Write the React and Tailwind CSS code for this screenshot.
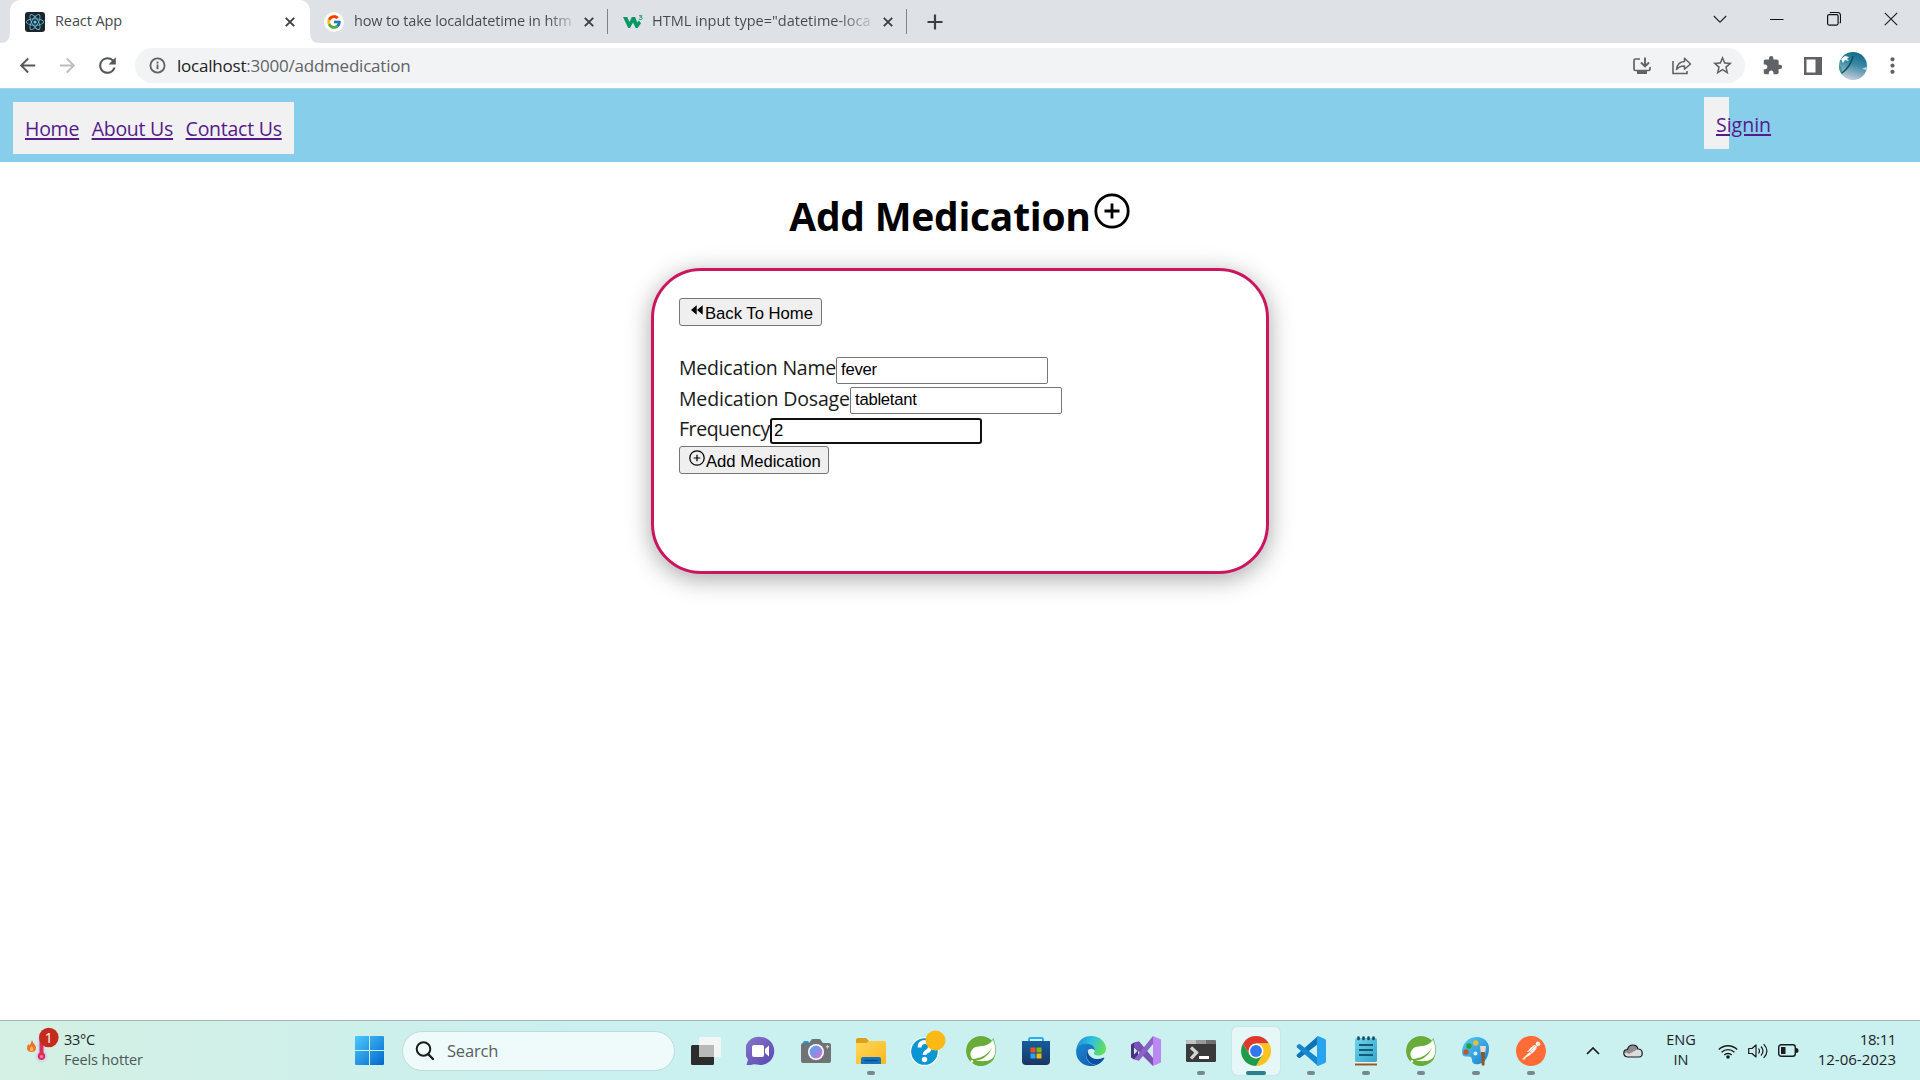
import { FcGoogle } from "react-icons/fc";
import { FaReact } from "react-icons/fa";
import { SiSpring, SiPostman } from "react-icons/si";
import {
  MdArrowBack,
  MdArrowForward,
  MdRefresh,
  MdStarBorder,
  MdExtension,
  MdMoreVert,
} from "react-icons/md";

function CloseX({ className = "" }) {
  return (
    <svg viewBox="0 0 10 10" className={"h-[10px] w-[10px] shrink-0 " + className}>
      <path d="M.8.8l8.4 8.4M9.2.8L.8 9.2" stroke="#3c4043" strokeWidth="1.9" fill="none" />
    </svg>
  );
}

function TabStrip() {
  return (
    <div className="flex h-[43px] items-end bg-[#dee1e6]">
      <svg viewBox="0 0 10 10" className="h-[10px] w-[10px]">
        <path d="M10 0v10H0Q10 10 10 0z" fill="#fff" />
      </svg>
      <div className="flex h-[43px] w-[300px] items-center rounded-t-[10px] bg-white pr-[15px] pl-[15px]">
        <div className="flex h-5 w-5 items-center justify-center rounded-[3px] bg-[#20232a]">
          <FaReact className="h-[18px] w-[18px] text-[#61c9e6]" />
        </div>
        <span className="ml-[10px] flex-1 pb-[2px] text-[14.5px] tracking-[-0.1px] text-[#45484c]">React App</span>
        <CloseX />
      </div>
      <svg viewBox="0 0 10 10" className="h-[10px] w-[10px]">
        <path d="M0 0v10H10Q0 10 0 0z" fill="#fff" />
      </svg>
      <div className="flex h-[43px] w-[290px] items-center border-[#808488] pl-[4px]">
        <div className="flex h-5 w-5 shrink-0 items-center justify-center rounded-full bg-white">
          <FcGoogle className="h-4 w-4" />
        </div>
        <span className="ml-[10px] w-[219px] overflow-hidden bg-linear-to-r from-[#45484c] from-88% to-[#45484c]/20 bg-clip-text pb-[2px] text-[14.5px] tracking-[-0.15px] whitespace-nowrap text-transparent">
          how to take localdatetime in htm
        </span>
        <CloseX className="ml-[11px]" />
        <div className="ml-[13px] h-[25px] w-px shrink-0 bg-[#808488]" />
      </div>
      <div className="flex h-[43px] w-[297px] items-center pl-[13px]">
        <svg viewBox="0 0 20 14" className="h-[14px] w-5 shrink-0">
          <path d="M0 2h4.200l2.300 5L8.800 2h3.400l2 5.200L16 5.600l2 2.600L14.600 13h-1.900L10 7.600 7 13H5.200z" fill="#059862" />
          <path d="M16 .8h3l-1.500 1.500c2.500 0 2 2.700-.2 2.200L16 4" fill="none" stroke="#059862" strokeWidth="1" />
        </svg>
        <span className="ml-[9px] w-[219px] overflow-hidden bg-linear-to-r from-[#45484c] from-85% to-[#45484c]/20 bg-clip-text pb-[2px] text-[14.5px] whitespace-nowrap text-transparent">
          HTML input type="datetime-loca
        </span>
        <CloseX className="ml-[12px]" />
        <div className="ml-[13px] h-[25px] w-px shrink-0 bg-[#808488]" />
      </div>
      <div className="flex h-[43px] flex-1 items-center pl-5">
        <svg viewBox="0 0 16 16" className="h-4 w-4">
          <path d="M8 .5v15M.5 8h15" stroke="#3c4043" strokeWidth="2.2" />
        </svg>
      </div>
      <div className="flex h-[43px] items-center gap-[43px] pr-[22px] pb-[6px]">
        <svg viewBox="0 0 14 14" className="h-[14px] w-[14px]">
          <path d="M.8 4L7 10.200 13.200 4" fill="none" stroke="#222" strokeWidth="1.100" />
        </svg>
        <svg viewBox="0 0 14 14" className="h-[14px] w-[14px]">
          <path d="M0 7.500h13.500" stroke="#111" />
        </svg>
        <svg viewBox="0 0 14 14" className="h-[14px] w-[14px]">
          <rect x=".6" y="2.600" width="10.500" height="10.500" rx="1.500" fill="none" stroke="#111" strokeWidth="1.200" />
          <path d="M3 1q.3-.5 1-.5h6.500q3 0 3 3V10q0 .8-.8 1" fill="none" stroke="#111" strokeWidth="1.100" />
        </svg>
        <svg viewBox="0 0 14 14" className="h-[14px] w-[14px]">
          <path d="M.8.8l12.400 12.400M13.200.8L.8 13.200" stroke="#222" strokeWidth="1.200" />
        </svg>
      </div>
    </div>
  );
}

function Toolbar() {
  return (
    <div className="flex h-[45px] items-center bg-white">
      <div className="flex w-[135px] items-center pl-[16px] text-[#54575b]">
        <MdArrowBack className="h-[23px] w-[23px]" />
        <MdArrowForward className="ml-[17px] h-[23px] w-[23px] text-[#bcbec1]" />
        <MdRefresh className="ml-[16px] h-[25px] w-[25px]" />
      </div>
      <div className="flex h-[35px] w-[1610px] items-center rounded-full bg-[#f1f3f4] pr-[11px] pl-[14px] text-[#5f6368]">
        <svg viewBox="0 0 18 18" className="h-[17px] w-[17px]">
          <circle cx="9" cy="9" r="7.500" fill="none" stroke="#5f6368" strokeWidth="1.900" />
          <path d="M9 8v5M9 4.800v2" stroke="#5f6368" strokeWidth="2" />
        </svg>
        <span className="ml-[11px] flex-1 text-[17px] tracking-[-0.22px]">
          <span className="text-[#202124]">localhost</span>:3000/addmedication
        </span>
        <svg viewBox="0 0 18 18" className="h-[18px] w-[18px]">
          <path d="M7 2H2.500Q1 2 1 3.500V12q0 1.500 1.500 1.500h13q1.500 0 1.500-1.500v-2" fill="none" stroke="#5f6368" strokeWidth="1.700" />
          <path d="M4 13h10v4H4z" fill="#5f6368" />
          <path d="M12 .5V9M8 5.500l4 4 4-4" fill="none" stroke="#5f6368" strokeWidth="1.900" />
        </svg>
        <svg viewBox="0 0 20 18" className="ml-[21px] h-[18px] w-5">
          <path d="M1 4v12.500h14V14" fill="none" stroke="#5f6368" strokeWidth="1.600" />
          <path d="M4.500 12.500Q5.500 5 12.500 4.600V1.300l6 5.700-6 5.300V9Q7.500 8.800 4.500 12.500z" fill="none" stroke="#5f6368" strokeWidth="1.500" strokeLinejoin="round" />
        </svg>
        <MdStarBorder className="ml-[19px] h-[23px] w-[23px]" />
      </div>
      <div className="flex flex-1 items-center pl-[17px] text-[#5f6368]">
        <MdExtension className="h-[21px] w-[21px]" />
        <svg viewBox="0 0 18 18" className="ml-[21px] h-[18px] w-[18px]">
          <path fillRule="evenodd" d="M0 0h18v18H0zM2.500 2.500v13h9v-13z" fill="#5f6368" />
        </svg>
        <svg viewBox="0 0 28 28" className="ml-[17px] h-7 w-7">
          <defs>
            <linearGradient id="sky" x1=".7" y1="0" x2=".4" y2="1">
              <stop offset="0" stopColor="#0c6a87" />
              <stop offset=".45" stopColor="#3c8aa6" />
              <stop offset="1" stopColor="#c9cfdc" />
            </linearGradient>
            <clipPath id="avatarClip"><circle cx="14" cy="14" r="14" /></clipPath>
          </defs>
          <g clipPath="url(#avatarClip)">
            <path d="M0 0h28v28H0z" fill="url(#sky)" />
            <path d="M0 13Q4 15 3 26L0 28z" fill="#2f9c95" />
            <path d="M14 4Q12 14 3 21" fill="none" stroke="#0a5560" strokeWidth="1.500" />
            <path d="M2 7l4-3 4 1-2 2 2 2-4-1-2 3z" fill="#fff" />
            <path d="M23 17l4-2 1 3z" fill="#bfe3ee" />
          </g>
        </svg>
        <MdMoreVert className="ml-[13px] h-[25px] w-[25px]" />
      </div>
    </div>
  );
}

function PlusCircle({ className, stroke }) {
  return (
    <svg viewBox="0 0 36 36" className={className}>
      <circle cx="18" cy="18" r="16.200" fill="none" stroke="#000" strokeWidth={stroke} />
      <path d="M18 10.500v15M10.500 18h15" stroke="#000" strokeWidth={stroke} />
    </svg>
  );
}

const inputBase =
  "h-[27px] w-[212px] rounded-[2px] border border-[#767676] bg-white px-[4px] pb-px font-['Liberation_Sans',sans-serif] text-[16.67px] text-black outline-none";

function NavBar() {
  return (
    <nav className="flex h-[74px] items-start border-t border-[#a9d5e6] bg-[#87ceeb] text-[19.5px] tracking-[-0.25px] text-[#551a8b]">
      <div className="mt-[13px] ml-[13px] flex h-[52px] w-[281px] items-center gap-[12.5px] bg-[#f1f1f1] pt-[2px] pl-[12px] whitespace-nowrap">
        <a className="underline decoration-[1.5px] underline-offset-2">Home</a>
        <a className="underline decoration-[1.5px] underline-offset-2">About Us</a>
        <a className="underline decoration-[1.5px] underline-offset-2">Contact Us</a>
      </div>
      <div className="mt-[8px] mr-[191px] ml-auto flex h-[52px] w-[25px] items-center bg-[#f1f1f1] pt-[3px] pl-[12px]">
        <a className="tracking-[0px] underline decoration-[1.5px] underline-offset-2">Signin</a>
      </div>
    </nav>
  );
}

function MedicationForm() {
  const button =
    "flex h-7 items-center rounded-[3px] border border-[#767676] bg-[#efefef] pt-[2px] font-['Liberation_Sans',sans-serif] text-[16.67px] text-black whitespace-nowrap";
  return (
    <main className="flex flex-1 flex-col items-center bg-white">
      <div className="flex h-[106px] items-start pr-[1px]">
        <h1 className="mt-[34px] text-[39px] leading-[40px] font-bold tracking-[-0.25px] text-black">Add Medication</h1>
        <PlusCircle className="mt-[31px] ml-[3px] h-9 w-9" stroke={2.800} />
      </div>
      <form className="flex h-[306px] w-[618px] flex-col items-start rounded-[50px] border-[3px] border-[#cb1560] bg-white pt-[27px] pl-[25px] text-[19.5px] tracking-[-0.25px] whitespace-nowrap text-[#1a1a1a] shadow-[0_5px_25px_rgba(0,0,0,0.35)]">
        <button type="button" className={button + " mb-[29px] w-[143px] pl-[11px] tracking-normal"}>
          <svg viewBox="0 0 12 10" className="mr-[2px] mb-[6px] h-[10px] w-[12px]">
            <path d="M0 5l5.700-4.700v9.400zM6 5L11.700.3v9.400z" fill="#000" />
          </svg>
          Back To Home
        </button>
        <label className="flex h-[31px] items-start leading-[25px]">
          <span className="w-[157px]">Medication Name</span>
          <input className={inputBase + " mt-[2px]"} defaultValue="fever" />
        </label>
        <label className="flex h-[30px] items-start leading-[25px]">
          <span className="w-[171px] tracking-[-0.17px]">Medication Dosage</span>
          <input className={inputBase + " mt-[1px]"} defaultValue="tabletant" />
        </label>
        <label className="flex h-[30px] items-start leading-[25px]">
          <span className="w-[91px] tracking-[-0.45px]">Frequency</span>
          <input className="mt-[2px] h-[26px] w-[212px] rounded-[3px] border-2 border-[#101010] bg-white px-[2px] pb-[1px] font-['Liberation_Sans',sans-serif] text-[16.67px] text-black outline-none" defaultValue="2" />
        </label>
        <button type="button" className={button + " w-[150px] pl-[9px] tracking-normal"}>
          <PlusCircle className="mr-px mb-[6px] h-[16px] w-[16px]" stroke={2.800} />
          Add Medication
        </button>
      </form>
    </main>
  );
}

function Icon({ name }) {
  const cls = "h-[30px] w-[30px]";
  switch (name) {
    case "taskview":
      return (
        <svg viewBox="0 0 30 30" className={cls}>
          <rect x="0" y="9" width="23" height="20" rx="1.500" fill="#2c2c2c" />
          <rect x="8" y="1" width="22" height="20" rx="1" fill="#f4f4f4" opacity=".95" />
          <path d="M8 9h15v12H8z" fill="#b9b9b9" />
        </svg>
      );
    case "chat":
      return (
        <svg viewBox="0 0 30 30" className={cls}>
          <defs><linearGradient id="chat" x1="0" y1="0" x2="1" y2="1"><stop offset="0" stopColor="#8c74cc" /><stop offset="1" stopColor="#5548b0" /></linearGradient></defs>
          <path d="M15 1a14 14 0 1 1-4 27.600Q8 27.500 5 29H.5L2 23.500A14 14 0 0 1 15 1z" fill="url(#chat)" />
          <rect x="6" y="9" width="12" height="12" rx="2" fill="#fff" />
          <path d="M19 13l4-3.500v11L19 17z" fill="#fff" />
        </svg>
      );
    case "camera":
      return (
        <svg viewBox="0 0 30 30" className={cls}>
          <defs>
            <linearGradient id="lens" x1="0" y1="0" x2="1" y2="1"><stop offset="0" stopColor="#49b0f0" /><stop offset=".5" stopColor="#8a8de6" /><stop offset="1" stopColor="#e070d0" /></linearGradient>
          </defs>
          <rect x="2" y="5" width="6" height="4" rx="1.500" fill="#1c9be0" />
          <path d="M2 7h6l3-4h8l3 4h6q2 0 2 2v16q0 2-2 2H2q-2 0-2-2V9q0-2 2-2z" fill="#6f7376" />
          <circle cx="15" cy="16" r="8" fill="#fff" />
          <circle cx="15" cy="16" r="6.500" fill="url(#lens)" />
          <path d="M26.500 9v3.500M24.800 10.800h3.500" stroke="#d8d8d8" />
        </svg>
      );
    case "folder":
      return (
        <svg viewBox="0 0 30 30" className={cls}>
          <defs><linearGradient id="folder" x1="0" y1="0" x2="1" y2="1"><stop offset="0" stopColor="#ffd75a" /><stop offset="1" stopColor="#f8b91c" /></linearGradient></defs>
          <path d="M0 4q0-2 2-2h8l3 3v5H0z" fill="#dca01a" />
          <path d="M0 7h10l3-2h15q2 0 2 2v21H0z" fill="url(#folder)" />
          <path d="M5 28v-5q0-2 2-2h16q2 0 2 2v5z" fill="#1673bd" />
          <path d="M9 24.500h12" stroke="#0c4d87" strokeWidth="1.500" strokeLinecap="round" />
        </svg>
      );
    case "help":
      return (
        <svg viewBox="0 0 36 36" className="mb-[6px] ml-[4px] h-9 w-9 shrink-0">
          <circle cx="14.500" cy="21.500" r="14.500" fill="#fff" />
          <circle cx="14.500" cy="21.500" r="13.300" fill="#0a95d3" />
          <path d="M9.500 17.500q0-5.500 5.500-5.500t5 4.700q0 3.300-3 4.700-2.500 1.500-2.300 3.500" fill="none" stroke="#fff" strokeWidth="4" />
          <circle cx="14.500" cy="29.500" r="2.700" fill="#fff" />
          <circle cx="25.500" cy="10.500" r="10" fill="#fdb913" />
        </svg>
      );
    case "spring":
      return (
        <div className="flex h-[30px] w-[30px] items-center justify-center rounded-full bg-white">
          <SiSpring className="h-[30px] w-[30px] text-[#68ad3a]" />
        </div>
      );
    case "store":
      return (
        <svg viewBox="0 0 30 30" className={cls}>
          <defs><linearGradient id="store" x1="0" y1="0" x2="0" y2="1"><stop offset="0" stopColor="#145d9e" /><stop offset="1" stopColor="#1b3562" /></linearGradient></defs>
          <path d="M8 6V3.500Q8 2 9.500 2h11Q22 2 22 3.500V6" fill="none" stroke="#27b0ee" strokeWidth="2" />
          <path d="M1 5h28v20q0 4-4 4H5q-4 0-4-4z" fill="url(#store)" />
          <path d="M9.500 11.500h5v5h-5z" fill="#f25022" />
          <path d="M15.500 11.500h5v5h-5z" fill="#7fba00" />
          <path d="M9.500 17.500h5v5h-5z" fill="#22a7f0" />
          <path d="M15.500 17.500h5v5h-5z" fill="#ffb900" />
        </svg>
      );
    case "edge":
      return (
        <svg viewBox="0 0 30 30" className={cls}>
          <defs>
            <linearGradient id="edgeTop" x1="0" y1=".2" x2="1" y2=".5"><stop offset="0" stopColor="#1c92d6" /><stop offset=".5" stopColor="#2fc0df" /><stop offset="1" stopColor="#63df56" /></linearGradient>
            <linearGradient id="edgeLow" x1="0" y1="0" x2=".6" y2="1"><stop offset="0" stopColor="#1b87d2" /><stop offset="1" stopColor="#1263b4" /></linearGradient>
          </defs>
          <path d="M.3 13C1.500 4.500 8 0 15 0c9 0 15 6.500 15 12.500 0 4.500-3.500 7-7.500 7-3.500 0-5-1.500-4.500-2.500 2-2.500 1.200-8.500-6.500-8.500C6 8.500 2 10.500.3 13z" fill="url(#edgeTop)" />
          <path d="M.2 13.500C1.500 9.500 6 7.500 11 7.700c6 .3 8.500 4 7.700 7.300-1-3-6.700-3.500-8.200 2-1.500 6 3 12 9.500 12.200C13 32.500-1.500 27 .2 13.500z" fill="url(#edgeLow)" />
          <path d="M11.500 14c-3.500 5 0 14.500 9 15 4-1.500 6.500-4.500 7.700-6.500.3-.8-.2-1-.9-.7C20 25 12 22 11.500 14z" fill="#0d4fa0" />
        </svg>
      );
    case "vs":
      return (
        <svg viewBox="0 0 30 30" className={cls}>
          <path d="M0 8.500l3-2 4 3.500v10l-4 3.500-3-2z" fill="#4d2f86" />
          <path d="M3 6.500l5-1.300L22 22v8L3 11z" fill="#7a51b5" />
          <path d="M22 0v8L8 24.800l-5-1.300z" fill="#8b63c6" />
          <path d="M22 0l8 3.500v23L22 30z" fill="#bb88f2" />
          <path d="M3 11.500v7l3.500-3.500z" fill="#c9eef0" />
        </svg>
      );
    case "terminal":
      return (
        <svg viewBox="0 0 30 30" className={cls}>
          <rect y="4" width="30" height="22" rx="1.500" fill="#3a3a3a" />
          <path d="M0 8V5.500Q0 4 1.500 4H10v4z" fill="#c2c2c2" />
          <path d="M10 4h10v4H10z" fill="#989898" />
          <path d="M20 4h8.500Q30 4 30 5.500V8H20z" fill="#707070" />
          <path d="M5 11.500l5.500 5L5 22.500" fill="none" stroke="#d4d4d4" strokeWidth="3.300" />
          <path d="M13 21.500h10" stroke="#fff" strokeWidth="3" />
        </svg>
      );
    case "chrome":
      return (
        <svg viewBox="0 0 30 30" className={cls}>
          <path d="M15 15L2.010 7.500A15 15 0 0 1 28 7.500H15z" fill="#dd3a2d" />
          <path d="M28 7.500A15 15 0 0 1 15 30l6.500-11.200L15 7.500z" fill="#fcc31e" />
          <path d="M2.010 7.500A15 15 0 0 0 15 30l6.500-11.200L8.500 18.800z" fill="#1f9c4b" />
          <path d="M2.010 7.500L8.500 18.800 15 7.500z" fill="#dd3a2d" />
          <circle cx="15" cy="15" r="7.500" fill="#fff" />
          <circle cx="15" cy="15" r="5.900" fill="#3278ea" />
        </svg>
      );
    case "vscode":
      return (
        <svg viewBox="0 0 30 30" className={cls}>
          <path d="M22 0L1 18.500q-1 1 0 2l1.500 1.300q.8.600 1.700 0L22 8z" fill="#0d74bb" />
          <path d="M22 30L1 11.500q-1-1 0-2l1.500-1.300q.8-.6 1.700 0L22 22z" fill="#1489d0" />
          <path d="M22 0l7 3q1 .5 1 1.700v20.600q0 1.200-1 1.700l-7 3q-1.500-.5-1-1.500V1.500Q21 .5 22 0z" fill="#28a4ee" />
        </svg>
      );
    case "notepad":
      return (
        <svg viewBox="0 0 30 30" className={cls}>
          <defs><linearGradient id="note" x1="0" y1="0" x2="1" y2="1"><stop offset="0" stopColor="#6fd2ec" /><stop offset="1" stopColor="#35a6cb" /></linearGradient></defs>
          <path d="M4 24h22v6H4z" fill="#f5f0ea" />
          <path d="M4 27.500h22v2H4z" fill="#8a5a2c" />
          <rect x="4" y="2" width="22" height="24" rx="1.500" fill="url(#note)" />
          <path d="M8 9h14M8 14h14M8 19h14" stroke="#125c78" strokeWidth="1.800" />
          <path d="M7.500 1.500v1.500M12.500 1.500v1.500M17.500 1.500v1.500M22.500 1.500v1.500" stroke="#134b63" strokeWidth="2.600" strokeLinecap="round" />
        </svg>
      );
    case "paint":
      return (
        <svg viewBox="0 0 30 30" className={cls}>
          <defs><linearGradient id="paint" x1="0" y1="0" x2="1" y2="1"><stop offset="0" stopColor="#55cdf5" /><stop offset="1" stopColor="#1b7fd0" /></linearGradient></defs>
          <path d="M16 1c7 0 12 5 12 11s-2 14-10 16c-5 1-7-1-7-4s-2-4-5-3.500S1 20 1 16C1 7 8 1 16 1z" fill="url(#paint)" />
          <circle cx="14.800" cy="7" r="2.700" fill="#e8bf2c" />
          <circle cx="8" cy="10" r="2.700" fill="#27a032" />
          <circle cx="5" cy="16" r="2.700" fill="#c55326" />
          <circle cx="14.500" cy="17.500" r="2" fill="#d8f3fa" />
          <path d="M19 10h6l-.8 7h-4.400z" fill="#ead9c6" />
          <path d="M20 16h4l-.5 13.500h-2.800z" fill="#8a5a2c" />
        </svg>
      );
    default:
      return (
        <div className="flex h-[30px] w-[30px] items-center justify-center rounded-full bg-white">
          <SiPostman className="h-[30px] w-[30px] text-[#ff6c37]" />
        </div>
      );
  }
}

const apps = [
  ["taskview"], ["chat"], ["camera"], ["folder", 1], ["help"], ["spring"], ["store"], ["edge"],
  ["vs"], ["terminal", 1], ["chrome", 2], ["vscode", 1], ["notepad", 1], ["spring", 1], ["paint", 1], ["postman", 1],
];

function Taskbar() {
  return (
    <footer className="flex h-[60px] items-center border-t border-[#a3b5b4] bg-linear-to-r from-[#d5f0e4] via-[#caf0ef] via-30% to-[#cbf0f0] text-[14.5px] text-[#1b2526]">
      <div className="flex w-[355px] items-center pl-[26px]">
        <svg viewBox="0 0 34 34" className="h-[34px] w-[34px] overflow-visible">
          <path d="M6 6q1 3 3 5 1.500 2 .8 4.500Q9 18 5.500 18T1 15q-.5-3 1.500-5l1 1.500Q5 9 6 6z" fill="#f1702f" />
          <path d="M5.500 12q2.500 2 1.500 4.500-1.500 1.500-3 0Q3 15 5.500 12z" fill="#fbc04a" />
          <path d="M11.500 4h8v13.500q2.500 2.500 2 5.500-1 5.500-6 5.500t-6-5.500q-.5-3 2-5.500z" fill="#cfdcf4" />
          <path d="M13.500 4h4v14.500q2 1.500 1.800 4-.6 3.500-3.800 3.500t-3.800-3.500q-.2-2.500 1.800-4z" fill="#dd2f51" />
          <circle cx="15.500" cy="22.500" r="1.500" fill="#ff8ba0" />
          <circle cx="22.800" cy="3.500" r="9.800" fill="#c42b1c" />
          <text x="22.800" y="8.500" textAnchor="middle" fill="#fff" fontSize="14">1</text>
        </svg>
        <div className="ml-[4px] flex flex-col pb-[2px] leading-[20px]">
          <span className="text-[14.5px] tracking-[-0.3px]">33°C</span>
          <span className="tracking-[-0.1px] text-[#4c5858]">Feels hotter</span>
        </div>
      </div>
      <svg viewBox="0 0 29 29" className="h-[29px] w-[29px]">
        <defs><linearGradient id="win" x1="0" y1="0" x2="1" y2="1"><stop offset="0" stopColor="#4cc9fb" /><stop offset="1" stopColor="#0168cd" /></linearGradient></defs>
        <path d="M1 0h13v14H0V1q0-1 1-1zM15 0h13q1 0 1 1v13H15zM0 15h14v14H1q-1 0-1-1zM15 15h14v13q0 1-1 1H15z" fill="url(#win)" />
      </svg>
      <div className="ml-[18px] flex h-[40px] w-[273px] items-center rounded-full border border-[#bcdcdb] bg-[#effafa] pl-[12px]">
        <svg viewBox="0 0 19 19" className="h-[19px] w-[19px]">
          <circle cx="8.500" cy="8" r="6.800" fill="none" stroke="#1c1c1c" strokeWidth="2" />
          <path d="M13 13l5 5" stroke="#1c1c1c" strokeWidth="2.400" strokeLinecap="round" />
        </svg>
        <span className="ml-[13px] pt-px text-[16.5px] tracking-[-0.2px] text-[#566061]">Search</span>
      </div>
      <div className="ml-[3px] flex">
        {apps.map(([name, state], i) => (
          <div key={i} className="flex h-[59px] w-[55px] items-center justify-center">
            <div className={"relative flex h-[48px] w-[48px] items-center justify-center rounded-[5px] " + (state === 2 ? "bg-[#e6f7f7] shadow-[0_0_1px_#9bb]" : "")}>
              <Icon name={name} />
              {state === 1 && <div className="absolute bottom-0 h-[4px] w-[8px] rounded-full bg-[#76898a]" />}
              {state === 2 && <div className="absolute bottom-0 h-[4px] w-[20px] rounded-full bg-[#28808c]" />}
            </div>
          </div>
        ))}
      </div>
      <svg viewBox="0 0 14 8" className="ml-[28px] h-[8px] w-[14px]">
        <path d="M1 7l6-6 6 6" fill="none" stroke="#1b1b1b" strokeWidth="1.700" />
      </svg>
      <svg viewBox="0 0 20 14" className="ml-[23px] h-[14px] w-5">
        <path d="M4.500 13Q.8 12.500.8 9T4.500 5.500Q5.500 1 9.800 1T15 5q4 0 4.200 4T16 13z" fill="#dcdcdc" />
        <path d="M4.500 5.500Q5.500 1 9.800 1T15 5L6 10Q4 8 1 9q.2-3.500 3.500-3.500z" fill="#8d8d8d" />
        <path d="M4.500 13Q.8 12.500.8 9T4.500 5.500Q5.500 1 9.800 1T15 5q4 0 4.200 4T16 13z" fill="none" stroke="#1b1b1b" strokeWidth="1.200" />
      </svg>
      <div className="ml-[20px] flex w-[36px] flex-col items-center pb-px leading-[20px]">
        <span>ENG</span>
        <span>IN</span>
      </div>
      <svg viewBox="0 0 20 16" className="ml-[19px] h-[16px] w-5">
        <g fill="none" stroke="#1b1b1b" strokeWidth="1.400">
          <path d="M.8 6.500a13 13 0 0 1 18.400 0M3.600 9.300a9 9 0 0 1 12.800 0M6.300 12a5.300 5.300 0 0 1 7.400 0" />
        </g>
        <circle cx="10" cy="14" r="1.800" fill="#1b1b1b" />
      </svg>
      <svg viewBox="0 0 20 16" className="ml-[10px] h-[16px] w-5">
        <g fill="none" stroke="#1b1b1b" strokeWidth="1.200">
          <path d="M.7 5.500H4L8 2v12L4 10.500H.7z" strokeLinejoin="round" />
          <path d="M10.500 5.500q2 2.500 0 5M13 3.500q4 4.500 0 9M15.700 1.200q6.500 6.800 0 13.600" />
        </g>
      </svg>
      <svg viewBox="0 0 21 13" className="ml-[10px] h-[13px] w-[21px]">
        <rect x=".7" y=".7" width="16.600" height="11.600" rx="2.500" fill="none" stroke="#1b1b1b" strokeWidth="1.400" />
        <path d="M3 3h4.500v7H3z" fill="#1b1b1b" />
        <path d="M18 4q2.500 0 2.500 2.500T18 9z" fill="#1b1b1b" />
      </svg>
      <div className="mr-[24px] ml-auto flex flex-col items-end pb-[3px] text-[15px] leading-[20px]">
        <span className="tracking-[-0.4px]">18:11</span>
        <span>12-06-2023</span>
      </div>
    </footer>
  );
}

export default function App() {
  return (
    <div className="flex h-[1080px] w-[1920px] flex-col overflow-hidden bg-white font-['Open_Sans','Noto_Sans',sans-serif]">
      <TabStrip />
      <Toolbar />
      <NavBar />
      <MedicationForm />
      <Taskbar />
    </div>
  );
}
